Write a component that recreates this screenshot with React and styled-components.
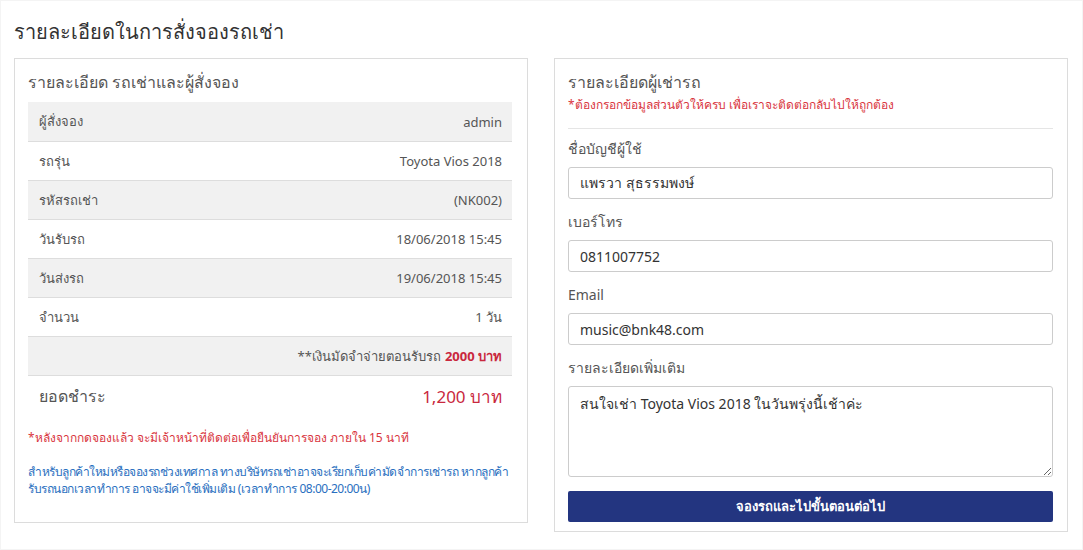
import React from "react";
import styled, { createGlobalStyle } from "styled-components";

const Global = createGlobalStyle`
  html, body { margin: 0; padding: 0; background: #fff; }
  body { font-family: "Noto Sans", "DejaVu Sans", sans-serif; color: #555; }
  * { box-sizing: border-box; }
`;

const Page = styled.div`
  width: 1083px;
  height: 550px;
  border: 1px solid #f4f4f4;
  padding: 17px 15px 0 13px;
`;

const Title = styled.h1`
  margin: 0 0 12px;
  font-size: 20px;
  line-height: 28px;
  font-weight: 400;
  color: #333;
`;

const Columns = styled.div`
  display: grid;
  grid-template-columns: 514px 514px;
  column-gap: 26px;
  align-items: start;
`;

const Panel = styled.section`
  border: 1px solid #dcdcdc;
  padding: ${(p) => p.$pad};
  background: #fff;
`;

const PanelHeading = styled.h2`
  margin: 0;
  font-size: 16px;
  line-height: 24px;
  font-weight: 400;
  color: #555;
`;

const Table = styled.div`
  margin-top: 8px;
  border-bottom: 1px solid #ddd;
`;

const Row = styled.div`
  display: flex;
  align-items: center;
  justify-content: ${(p) => (p.$end ? "flex-end" : "space-between")};
  height: 39px;
  padding: 0 10px 0 11px;
  background: ${(p) => (p.$striped ? "#f1f1f1" : "#fff")};
  border-top: ${(p) => (p.$first ? "none" : "1px solid #ddd")};
  font-size: 13px;
  color: #555;
`;

const Strong = styled.b`
  color: #c9283e;
  margin-left: 4px;
`;

const TotalRow = styled.div`
  display: flex;
  align-items: center;
  justify-content: space-between;
  height: 40px;
  padding: 0 10px 0 11px;
`;

const TotalLabel = styled.span`
  font-size: 16px;
  color: #555;
`;

const TotalValue = styled.span`
  font-size: 17px;
  color: #c9283e;
`;

const Note = styled.p`
  margin: ${(p) => p.$m || "0"};
  font-size: 12px;
  line-height: 17px;
  letter-spacing: ${(p) => (p.$tight ? "-0.5px" : "0")};
  color: ${(p) => p.$color};
`;

const Divider = styled.hr`
  border: 0;
  border-top: 1px solid #e5e5e5;
  margin: 15px 0 10px;
`;

const Field = styled.div`
  display: flex;
  flex-direction: column;
  margin-bottom: 13px;
`;

const Label = styled.label`
  font-size: 14px;
  line-height: 20px;
  color: #555;
  margin-bottom: 8px;
`;

const Input = styled.input`
  height: 32px;
  width: 100%;
  border: 1px solid #ccc;
  border-radius: 3px;
  padding: 0 11px;
  font: inherit;
  font-size: 14px;
  color: #333;
  outline: none;
`;

const TextArea = styled.textarea`
  height: 91px;
  width: 100%;
  border: 1px solid #ccc;
  border-radius: 3px;
  padding: 6px 11px;
  font: inherit;
  font-size: 14px;
  color: #333;
  outline: none;
  resize: vertical;
`;

const Button = styled.button`
  width: 100%;
  height: 31px;
  margin-top: 1px;
  border: 0;
  border-radius: 2px;
  background: #233580;
  color: #fff;
  font: inherit;
  font-size: 13px;
  font-weight: 700;
`;

const rows = [
  ["ผู้สั่งจอง", "admin"],
  ["รถรุ่น", "Toyota Vios 2018"],
  ["รหัสรถเช่า", "(NK002)"],
  ["วันรับรถ", "18/06/2018 15:45"],
  ["วันส่งรถ", "19/06/2018 15:45"],
  ["จำนวน", "1 วัน"],
];

export default function App() {
  return (
    <>
      <Global />
      <Page>
        <Title>รายละเอียดในการสั่งจองรถเช่า</Title>
        <Columns>
          <Panel $pad="11px 15px 25px 13px">
            <PanelHeading>รายละเอียด รถเช่าและผู้สั่งจอง</PanelHeading>
            <Table>
              {rows.map(([k, v], i) => (
                <Row key={k} $striped={i % 2 === 0} $first={i === 0}>
                  <span>{k}</span>
                  <span>{v}</span>
                </Row>
              ))}
              <Row $striped $end>
                <span>
                  **เงินมัดจำจ่ายตอนรับรถ<Strong>2000 บาท</Strong>
                </span>
              </Row>
            </Table>
            <TotalRow>
              <TotalLabel>ยอดชำระ</TotalLabel>
              <TotalValue>1,200 บาท</TotalValue>
            </TotalRow>
            <Note $color="#d9363e" $m="13px 0 0">
              *หลังจากกดจองแล้ว จะมีเจ้าหน้าที่ติดต่อเพื่อยืนยันการจอง ภายใน 15 นาที
            </Note>
            <Note $color="#2a6fc0" $m="17px 0 0" $tight>
              สำหรับลูกค้าใหม่หรือจองรถช่วงเทศกาล ทางบริษัทรถเช่าอาจจะเรียกเก็บค่ามัดจำการเช่ารถ หากลูกค้า รับรถนอกเวลาทำการ อาจจะมีค่าใช้เพิ่มเติม (เวลาทำการ 08:00-20:00น)
            </Note>
          </Panel>
          <Panel $pad="11px 14px 9px 13px">
            <PanelHeading>รายละเอียดผู้เช่ารถ</PanelHeading>
            <Note $color="#d9363e" $m="2px 0 0">
              *ต้องกรอกข้อมูลส่วนตัวให้ครบ เพื่อเราจะติดต่อกลับไปให้ถูกต้อง
            </Note>
            <Divider />
            <Field>
              <Label>ชื่อบัญชีผู้ใช้</Label>
              <Input defaultValue="แพรวา สุธรรมพงษ์" />
            </Field>
            <Field>
              <Label>เบอร์โทร</Label>
              <Input defaultValue="0811007752" />
            </Field>
            <Field>
              <Label>Email</Label>
              <Input defaultValue="music@bnk48.com" />
            </Field>
            <Field>
              <Label>รายละเอียดเพิ่มเติม</Label>
              <TextArea defaultValue="สนใจเช่า Toyota Vios 2018 ในวันพรุ่งนี้เช้าค่ะ" />
            </Field>
            <Button>จองรถและไปขั้นตอนต่อไป</Button>
          </Panel>
        </Columns>
      </Page>
    </>
  );
}
